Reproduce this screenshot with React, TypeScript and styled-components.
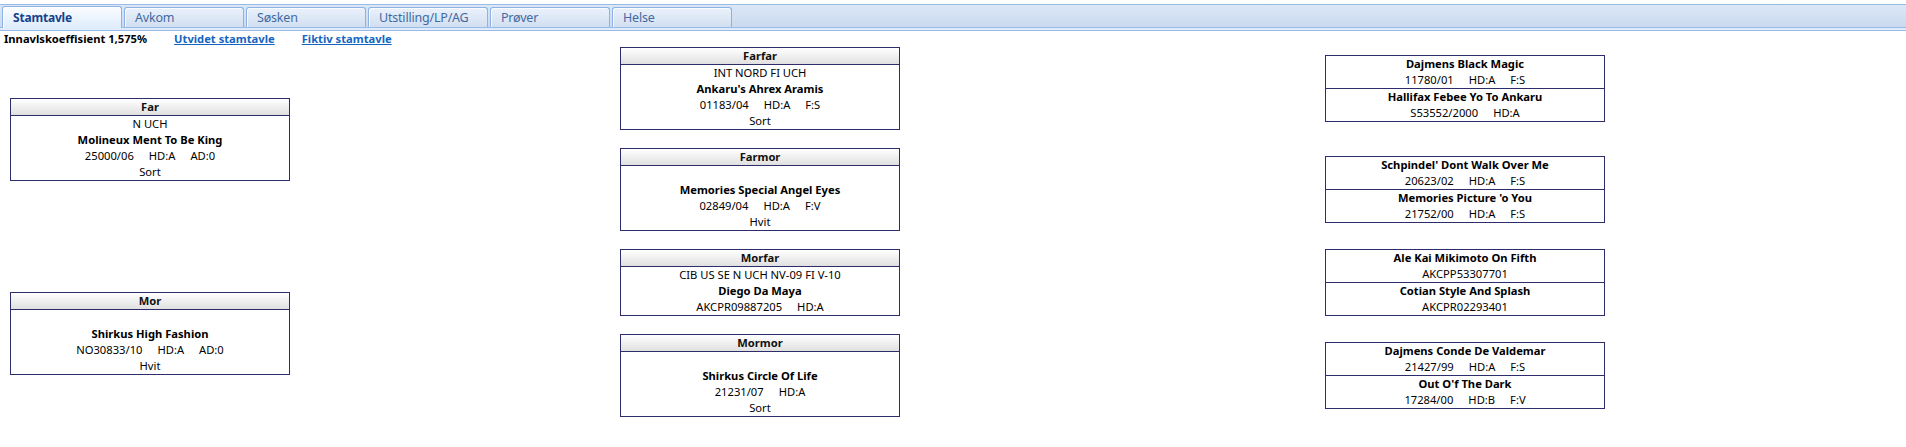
import React from "react";
import styled, { createGlobalStyle, css } from "styled-components";

const GlobalStyle = createGlobalStyle`
  html, body { margin: 0; padding: 0; background: #ffffff; }
  body { font-family: "Noto Sans", "Open Sans", sans-serif; color: #000; }
`;

const NAVY = "#2e2d6b";
const TAB_BORDER = "#99bbe8";

const TabBar = styled.div`
  margin-top: 4px;
  height: 22px;
  border-top: 1px solid ${TAB_BORDER};
  border-bottom: 1px solid ${TAB_BORDER};
  background: linear-gradient(#dbe7f7, #cbdaef);
  display: flex;
  align-items: flex-end;
  gap: 2.5px;
  padding-left: 2px;
`;

const Tab = styled.div<{ $active?: boolean }>`
  box-sizing: border-box;
  width: 119.5px;
  height: 20px;
  padding-left: 10px;
  border: 1px solid #8db2e3;
  border-bottom: none;
  border-radius: 3px 3px 0 0;
  box-shadow: inset 1px 1px 0 rgba(255, 255, 255, 0.75);
  background: linear-gradient(#eaf1fb, #d2dff1);
  font-family: "Noto Sans", "Open Sans", sans-serif;
  font-size: 12.5px;
  letter-spacing: -0.2px;
  line-height: 19px;
  color: #416aa3;
  ${(p) =>
    p.$active &&
    css`
      height: 22px;
      margin-bottom: -1px;
      line-height: 21px;
      background: linear-gradient(#fbfdff, #deecfd);
      color: #15428b;
      font-weight: bold;
      font-size: 12px;
      position: relative;
    `}
`;

const Spacer = styled.div`
  height: 2px;
  background: #deecfd;
  border-bottom: 1px solid ${TAB_BORDER};
`;

const InfoBar = styled.div`
  display: flex;
  align-items: center;
  gap: 27px;
  height: 16px;
  padding-left: 4px;
  font-size: 11.2px;
  line-height: 16px;
  font-weight: bold;
`;

const InfoText = styled.span`
  color: #000;
`;

const InfoLink = styled.a`
  color: #1565c0;
  text-decoration: underline;
  cursor: pointer;
`;

const Pedigree = styled.div`
  display: grid;
  grid-template-columns: 610px 705px 280px;
  padding-left: 10px;
`;

const Cell = styled.div<{ $col: number; $row: number; $span?: number }>`
  grid-column: ${(p) => p.$col};
  grid-row: ${(p) => `${p.$row} / span ${p.$span ?? 1}`};
  padding-bottom: 18px;
  display: flex;
  align-items: center;
`;

const Box = styled.div`
  box-sizing: border-box;
  width: 280px;
  border: 1px solid ${NAVY};
  font-size: 11.2px;
  text-align: center;
`;

const BoxHeader = styled.div`
  height: 16px;
  line-height: 16px;
  font-weight: bold;
  background: linear-gradient(#ffffff, #e0e0e0);
  border-bottom: 1px solid ${NAVY};
  color: #111;
`;

const Line = styled.div<{ $bold?: boolean }>`
  height: 16px;
  line-height: 16px;
  font-weight: ${(p) => (p.$bold ? "bold" : "normal")};
  display: flex;
  justify-content: center;
  gap: 15px;
  white-space: nowrap;
`;

const Section = styled.div`
  & + & {
    border-top: 1px solid ${NAVY};
  }
`;

type Dog = {
  title?: string;
  name: string;
  reg: string[];
  color?: string;
};

type Parent = Dog & { label: string };

const DogBox: React.FC<{ dog: Parent }> = ({ dog }) => (
  <Box>
    <BoxHeader>{dog.label}</BoxHeader>
    <Line>{dog.title ?? "\u00a0"}</Line>
    <Line $bold>{dog.name}</Line>
    <Line>
      {dog.reg.map((r) => (
        <span key={r}>{r}</span>
      ))}
    </Line>
    {dog.color && <Line>{dog.color}</Line>}
  </Box>
);

const PairBox: React.FC<{ dogs: Dog[] }> = ({ dogs }) => (
  <Box>
    {dogs.map((d) => (
      <Section key={d.name}>
        <Line $bold>{d.name}</Line>
        <Line>
          {d.reg.map((r) => (
            <span key={r}>{r}</span>
          ))}
        </Line>
      </Section>
    ))}
  </Box>
);

const far: Parent = {
  label: "Far",
  title: "N UCH",
  name: "Molineux Ment To Be King",
  reg: ["25000/06", "HD:A", "AD:0"],
  color: "Sort",
};
const mor: Parent = {
  label: "Mor",
  name: "Shirkus High Fashion",
  reg: ["NO30833/10", "HD:A", "AD:0"],
  color: "Hvit",
};

const grand: Parent[] = [
  {
    label: "Farfar",
    title: "INT NORD FI UCH",
    name: "Ankaru's Ahrex Aramis",
    reg: ["01183/04", "HD:A", "F:S"],
    color: "Sort",
  },
  {
    label: "Farmor",
    name: "Memories Special Angel Eyes",
    reg: ["02849/04", "HD:A", "F:V"],
    color: "Hvit",
  },
  {
    label: "Morfar",
    title: "CIB US SE N UCH NV-09 FI V-10",
    name: "Diego Da Maya",
    reg: ["AKCPR09887205", "HD:A"],
  },
  {
    label: "Mormor",
    name: "Shirkus Circle Of Life",
    reg: ["21231/07", "HD:A"],
    color: "Sort",
  },
];

const great: Dog[][] = [
  [
    { name: "Dajmens Black Magic", reg: ["11780/01", "HD:A", "F:S"] },
    { name: "Hallifax Febee Yo To Ankaru", reg: ["S53552/2000", "HD:A"] },
  ],
  [
    { name: "Schpindel' Dont Walk Over Me", reg: ["20623/02", "HD:A", "F:S"] },
    { name: "Memories Picture 'o You", reg: ["21752/00", "HD:A", "F:S"] },
  ],
  [
    { name: "Ale Kai Mikimoto On Fifth", reg: ["AKCPP53307701"] },
    { name: "Cotian Style And Splash", reg: ["AKCPR02293401"] },
  ],
  [
    { name: "Dajmens Conde De Valdemar", reg: ["21427/99", "HD:A", "F:S"] },
    { name: "Out O'f The Dark", reg: ["17284/00", "HD:B", "F:V"] },
  ],
];

const tabs = ["Stamtavle", "Avkom", "Søsken", "Utstilling/LP/AG", "Prøver", "Helse"];

export default function App() {
  return (
    <>
      <GlobalStyle />
      <TabBar>
        {tabs.map((t, i) => (
          <Tab key={t} $active={i === 0}>
            {t}
          </Tab>
        ))}
      </TabBar>
      <Spacer />
      <InfoBar>
        <InfoText>Innavlskoeffisient 1,575%</InfoText>
        <InfoLink>Utvidet stamtavle</InfoLink>
        <InfoLink>Fiktiv stamtavle</InfoLink>
      </InfoBar>
      <Pedigree>
        <Cell $col={1} $row={1} $span={2}>
          <DogBox dog={far} />
        </Cell>
        <Cell $col={1} $row={3} $span={2}>
          <DogBox dog={mor} />
        </Cell>
        {grand.map((g, i) => (
          <Cell key={g.label} $col={2} $row={i + 1}>
            <DogBox dog={g} />
          </Cell>
        ))}
        {great.map((pair, i) => (
          <Cell key={i} $col={3} $row={i + 1}>
            <PairBox dogs={pair} />
          </Cell>
        ))}
      </Pedigree>
    </>
  );
}
